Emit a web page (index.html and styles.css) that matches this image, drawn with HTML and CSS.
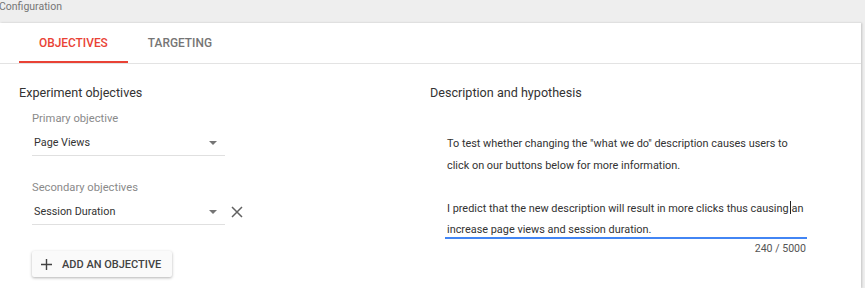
FILE: index.html
```html
<!DOCTYPE html>
<html>
<head>
<meta charset="utf-8">
<link rel="stylesheet" href="styles.css">
</head>
<body>
<div class="page-title">Configuration</div>
<div class="card">
  <div class="tabs">
    <div class="tab active">OBJECTIVES</div>
    <div class="tab">TARGETING</div>
  </div>
  <div class="content">
    <div class="col">
      <div class="section-title">Experiment objectives</div>
      <div class="fields">
        <div class="field">
          <div class="label">Primary objective</div>
          <div class="select-row">
            <div class="select">
              <span class="value">Page Views</span>
              <span class="arrow"></span>
            </div>
          </div>
        </div>
        <div class="field second">
          <div class="label">Secondary objectives</div>
          <div class="select-row">
            <div class="select">
              <span class="value">Session Duration</span>
              <span class="arrow"></span>
            </div>
            <svg class="close" width="12" height="12" viewBox="0 0 12 12"><path d="M1 1L11 11M11 1L1 11" stroke="#616161" stroke-width="1.5" fill="none"/></svg>
          </div>
        </div>
        <button class="add-btn">
          <svg width="11" height="11" viewBox="0 0 11 11"><path d="M5.5 0V11M0 5.5H11" stroke="#424242" stroke-width="1.4" fill="none"/></svg>
          <span>ADD AN OBJECTIVE</span>
        </button>
      </div>
    </div>
    <div class="col">
      <div class="section-title">Description and hypothesis</div>
      <div class="textarea">
        <p>To test whether changing the "what we do" description causes users to<br>click on our buttons below for more information.</p>
        <p class="blank">&nbsp;</p>
        <p>I predict that the new description will result in more clicks thus causing<span class="caret"></span>an<br>increase page views and session duration.</p>
      </div>
      <div class="counter">240 / 5000</div>
    </div>
  </div>
</div>
</body>
</html>
```

FILE: styles.css
```css
html, body {
  margin: 0;
  padding: 0;
  background: #eeeeee;
  font-family: Roboto, "Liberation Sans", Arial, sans-serif;
  height: 288px;
  overflow: hidden;
}
.page-title {
  height: 23px;
  font-size: 10.5px;
  line-height: 14px;
  color: #757575;
  margin-left: -1px;
}
.card {
  width: 861px;
  height: 265px;
  background: #fff;
  box-shadow: 1px 0 2px rgba(0,0,0,0.18);
}
.tabs {
  display: flex;
  height: 40px;
  padding-left: 19px;
  border-bottom: 1px solid #e3e3e3;
}
.tab {
  padding: 0 20px;
  font-size: 11.9px;
  font-weight: 500;
  color: #757575;
  line-height: 40px;
  box-sizing: border-box;
  height: 40px;
}
.tab.active {
  color: #e94235;
  border-bottom: 2px solid #e94235;
}
.content {
  display: grid;
  grid-template-columns: 411px 411px;
  padding: 0 19px;
}
.section-title {
  font-size: 12.6px;
  color: #333;
  margin-top: 20px;
  line-height: 18px;
}
.fields {
  margin-left: 13px;
  margin-top: 10px;
  display: flex;
  flex-direction: column;
}
.label {
  font-size: 11.2px;
  color: #8a8a8a;
  line-height: 14px;
}
.select-row {
  display: flex;
  align-items: center;
  margin-top: 8px;
}
.select {
  width: 193px;
  height: 22px;
  display: flex;
  align-items: center;
  justify-content: space-between;
  border-bottom: 1px solid #e0e0e0;
  box-sizing: border-box;
  padding: 0 8px 4px 2px;
}
.value {
  font-size: 10.8px;
  color: #333;
}
.arrow {
  width: 0;
  height: 0;
  border-left: 4px solid transparent;
  border-right: 4px solid transparent;
  border-top: 4px solid #757575;
}
.close {
  margin-left: 6px;
  margin-top: -5px;
}
.field.second {
  margin-top: 25px;
}
.add-btn {
  margin-top: 26px;
  width: 140px;
  height: 26px;
  border: none;
  background: #fafafa;
  box-shadow: 0 1px 3px rgba(0,0,0,0.3);
  border-radius: 2px;
  display: flex;
  align-items: center;
  padding: 0 0 0 9px;
  font-family: inherit;
  font-size: 11px;
  font-weight: 500;
  color: #424242;
  gap: 10px;
}
.textarea {
  margin-left: 15px;
  margin-top: 31px;
  width: 362px;
  border-bottom: 2px solid #4285f4;
  font-size: 10.9px;
  color: #333;
  line-height: 21.5px;
  padding: 0 0 0 2px;
  box-sizing: border-box;
  white-space: nowrap;
}
.textarea p {
  margin: 0;
}
.textarea p:last-child {
  margin-bottom: -4px;
}
.caret {
  display: inline-block;
  width: 1px;
  height: 13px;
  margin: 0 1px 0 1px;
  background: #222;
  vertical-align: -2px;
}
.counter {
  width: 376px;
  text-align: right;
  font-size: 10.6px;
  color: #555;
  margin-top: 3px;
}
```
